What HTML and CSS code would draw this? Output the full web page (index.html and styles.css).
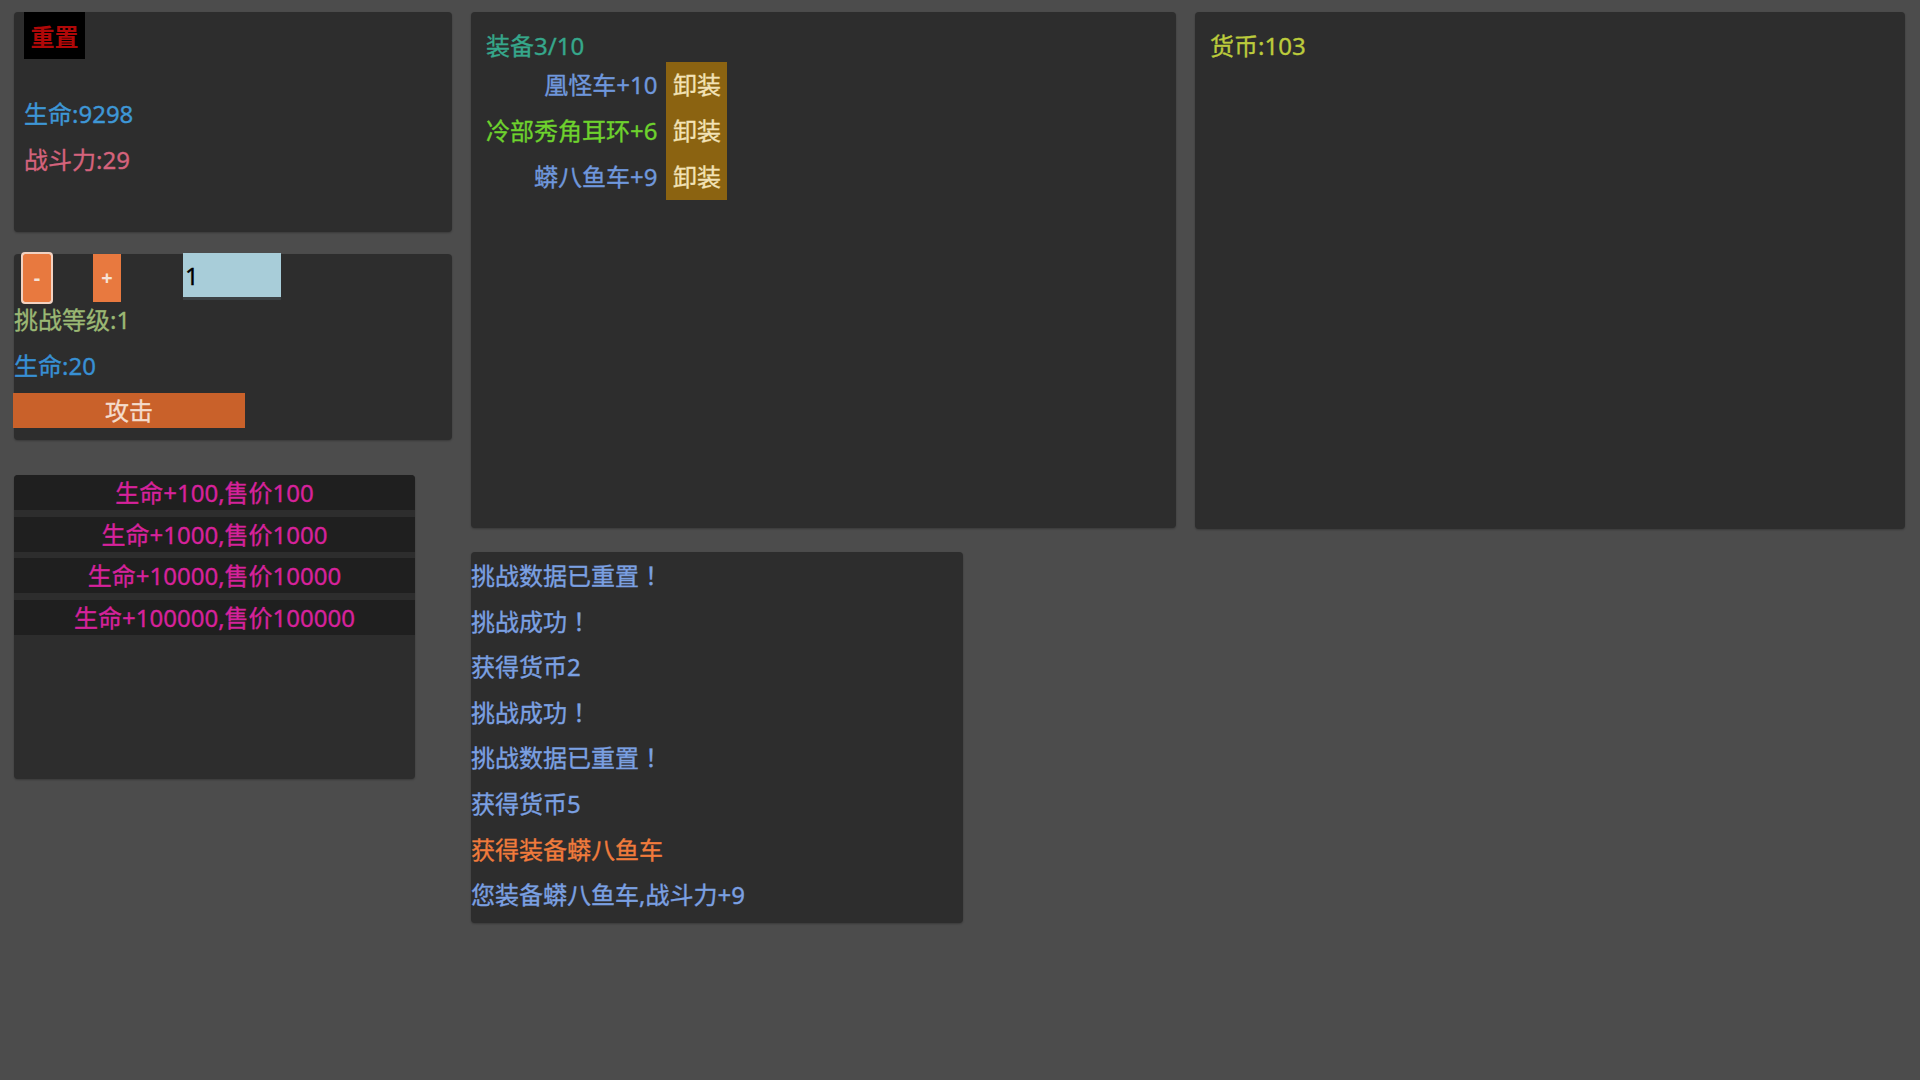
FILE: index.html
```html
<!DOCTYPE html>
<html lang="zh-CN">
<head>
<meta charset="utf-8">
<title>挑战</title>
<link rel="stylesheet" href="styles.css">
</head>
<body>
<div class="page">
  <div class="col-left">
    <section class="panel stats">
      <button class="reset-btn">重置</button>
      <div class="stat hp">生命:9298</div>
      <div class="stat power">战斗力:29</div>
    </section>
    <section class="panel challenge">
      <div class="controls">
        <button class="step-btn minus">-</button>
        <button class="step-btn plus">+</button>
        <input class="level-input" type="text" value="1">
      </div>
      <div class="level">挑战等级:1</div>
      <div class="enemy-hp">生命:20</div>
      <button class="attack-btn">攻击</button>
    </section>
    <section class="panel shop">
      <div class="shop-row">生命+100,售价100</div>
      <div class="shop-row">生命+1000,售价1000</div>
      <div class="shop-row">生命+10000,售价10000</div>
      <div class="shop-row">生命+100000,售价100000</div>
    </section>
  </div>
  <div class="col-mid">
    <section class="panel equip">
      <div class="equip-title">装备3/10</div>
      <table class="equip-table">
        <tr><td class="item blue">凰怪车+10</td><td class="unequip">卸装</td></tr>
        <tr><td class="item green">冷部秀角耳环+6</td><td class="unequip">卸装</td></tr>
        <tr><td class="item blue">蟒八鱼车+9</td><td class="unequip">卸装</td></tr>
      </table>
    </section>
    <section class="panel log">
      <div class="log-line">挑战数据已重置<span class="fw">！</span></div>
      <div class="log-line">挑战成功<span class="fw">！</span></div>
      <div class="log-line">获得货币2</div>
      <div class="log-line">挑战成功<span class="fw">！</span></div>
      <div class="log-line">挑战数据已重置<span class="fw">！</span></div>
      <div class="log-line">获得货币5</div>
      <div class="log-line loot">获得装备蟒八鱼车</div>
      <div class="log-line">您装备蟒八鱼车,战斗力+9</div>
    </section>
  </div>
  <div class="col-right">
    <section class="panel wallet">
      <div class="coins">货币:103</div>
    </section>
  </div>
</div>
</body>
</html>
```
FILE: styles.css
```css
* { box-sizing: border-box; }
html, body {
  margin: 0;
  padding: 0;
  background: #4c4c4c;
  width: 1920px;
  height: 1080px;
  overflow: hidden;
}
body {
  font-family: "Noto Sans", "Noto Sans CJK SC", sans-serif;
  font-size: 24px;
  -webkit-text-stroke: 0.35px currentColor;
}
.page {
  display: grid;
  grid-template-columns: 438px 705px 710px;
  column-gap: 19px;
  padding: 12px 0 0 14px;
  align-items: start;
}
.panel {
  background: #2d2d2d;
  border-radius: 4px;
  box-shadow: 0 1px 2px rgba(0,0,0,0.25);
}
.col-left, .col-mid {
  display: flex;
  flex-direction: column;
  align-items: flex-start;
}
.fw {
  display: inline-block;
  width: 1em;
  text-align: center;
  line-height: 1;
  font-family: "Noto Sans CJK JP", "Noto Sans CJK SC", sans-serif;
}
/* stats panel */
.stats {
  width: 438px;
  height: 220px;
  padding: 0 10px;
}
.reset-btn {
  display: block;
  margin: 0;
  width: 61px;
  height: 47px;
  padding: 0;
  border: none;
  border-radius: 0;
  background: #000;
  color: #b00808;
  font-family: "Noto Sans CJK SC", sans-serif;
  font-size: 24px;
  font-weight: 700;
  line-height: 47px;
  -webkit-text-stroke: 0;
}
.stat {
  line-height: 46px;
}
.stats .hp { margin-top: 32px; color: #3e97d6; }
.stats .power { color: #d4637c; }
/* challenge panel */
.challenge {
  width: 438px;
  height: 186px;
  margin-top: 22px;
}
.controls {
  display: flex;
  align-items: flex-start;
  height: 48px;
}
.step-btn {
  width: 28px;
  height: 48px;
  padding: 0;
  border: none;
  background: #e8793f;
  color: #f6e2d6;
  font-family: inherit;
  font-size: 20px;
  font-weight: 700;
  line-height: 48px;
  -webkit-text-stroke: 0;
}
.minus {
  margin-left: 9px;
  border-radius: 2px;
  outline: 2px solid #f2d2c2;
  outline-offset: 0;
  box-shadow: 0 0 0 1px #f2d2c2;
}
.plus { margin-left: 42px; }
.level-input {
  margin-left: 62px;
  width: 98px;
  height: 47px;
  margin-top: -1px;
  border: none;
  border-bottom: 3px solid #3b4144;
  background: #a8cdd9;
  color: #000;
  font-family: inherit;
  font-size: 24px;
  padding: 0 2px;
  outline: none;
}
.level {
  line-height: 36px;
  color: #9bb874;
}
.enemy-hp {
  margin-top: 10px;
  line-height: 36px;
  color: #3890d4;
}
.attack-btn {
  display: block;
  margin-top: 9px;
  margin-left: -1px;
  width: 232px;
  height: 35px;
  padding: 0;
  border: none;
  background: #c9612a;
  color: #f4dccc;
  font-family: inherit;
  font-size: 24px;
  line-height: 35px;
  -webkit-text-stroke: 0.35px currentColor;
}
/* shop panel */
.shop {
  width: 401px;
  height: 304px;
  margin-top: 35px;
  display: flex;
  flex-direction: column;
  gap: 6.5px;
  overflow: hidden;
}
.shop-row {
  height: 35px;
  line-height: 35px;
  background: #1f1f1f;
  color: #d6229b;
  text-align: center;
}
/* equip panel */
.equip {
  width: 705px;
  height: 516px;
  padding: 18px 15px 0 15px;
}
.equip-title {
  line-height: 32px;
  color: #36a78b;
}
.equip-table {
  border-collapse: collapse;
  border-spacing: 0;
}
.equip-table td {
  height: 46px;
  padding: 0;
  line-height: 46px;
}
.equip-table .item {
  text-align: right;
  padding-right: 9px;
}
.equip-table .blue { color: #6f97dc; }
.equip-table .green { color: #6ed22d; }
.equip-table .unequip {
  width: 61px;
  background: #8b6311;
  color: #f2e2b6;
  text-align: center;
}
/* log panel */
.log {
  width: 492px;
  height: 371px;
  margin-top: 24px;
  padding: 1px 0 3px;
}
.log-line {
  height: 45.6px;
  line-height: 45.6px;
  color: #7ba0e2;
  overflow: hidden;
}
.log-line.loot { color: #f07b3c; }
/* wallet panel */
.wallet {
  width: 710px;
  height: 517px;
  padding: 18px 15px 0 15px;
}
.coins {
  line-height: 32px;
  color: #bccb3c;
}
```
